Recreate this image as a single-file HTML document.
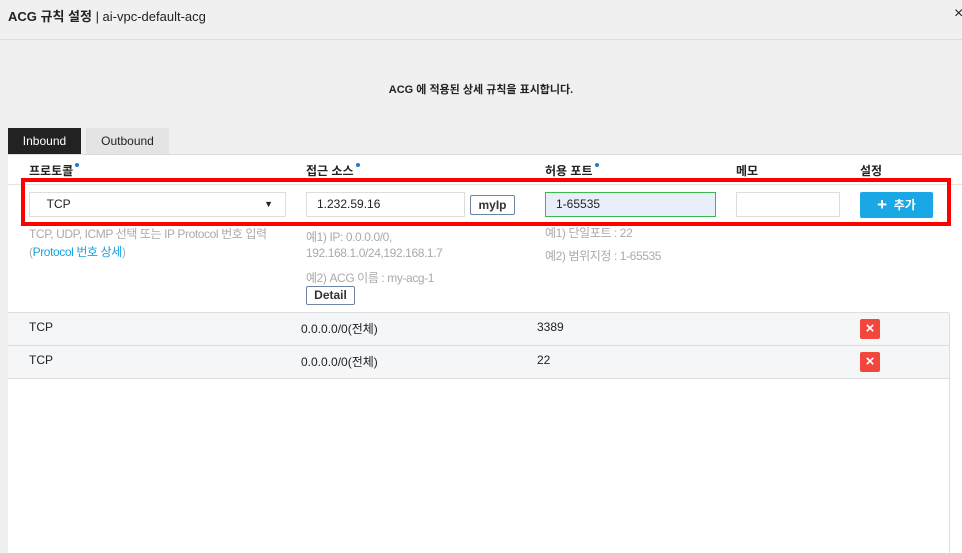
<!DOCTYPE html>
<html><head><meta charset="utf-8"><style>
*{margin:0;padding:0;box-sizing:border-box}
body{width:962px;height:553px;overflow:hidden;background:#f0f0f0;font-family:"Liberation Sans","Noto Sans CJK KR",sans-serif;position:relative;color:#222;font-size:12px}
.a{position:absolute;white-space:nowrap}
.dot{display:inline-block;width:4px;height:4px;border-radius:50%;background:#1a7fd4;vertical-align:top;margin-left:2px;margin-top:1px}
.hint{color:#aaa;font-size:12px;letter-spacing:-0.4px}
.inp{position:absolute;background:#fff;border:1px solid #ddd;height:25px;font-size:12px;padding-left:10px;line-height:23px}
.del{position:absolute;width:20px;height:20px;background:#f2473c;border-radius:2px;color:#fff;text-align:center;line-height:20px;font-size:15px;font-weight:bold}
</style></head><body>
<div class="a" style="left:8px;top:6px;font-size:13px"><b>ACG 규칙 설정</b> | ai-vpc-default-acg</div>
<div class="a" style="left:954px;top:5px;font-size:16px;color:#222">×</div>
<div class="a" style="left:0;top:39px;width:962px;height:1px;background:#ddd"></div>
<div class="a" style="left:0;top:81px;width:962px;text-align:center;font-size:11px;font-weight:bold">ACG 에 적용된 상세 규칙을 표시합니다.</div>
<div class="a" style="left:8px;top:128px;width:73px;height:26px;background:#222;color:#fff;text-align:center;line-height:26px">Inbound</div>
<div class="a" style="left:86px;top:128px;width:83px;height:26px;background:#e4e4e4;color:#222;text-align:center;line-height:26px">Outbound</div>
<div class="a" style="left:8px;top:154px;width:954px;height:399px;background:#fff;border-top:1px solid #ddd"></div>
<div class="a" style="left:29px;top:162px;font-weight:bold">프로토콜<span class="dot"></span></div>
<div class="a" style="left:306px;top:162px;font-weight:bold">접근 소스<span class="dot"></span></div>
<div class="a" style="left:545px;top:162px;font-weight:bold">허용 포트<span class="dot"></span></div>
<div class="a" style="left:736px;top:162px;font-weight:bold">메모</div>
<div class="a" style="left:860px;top:162px;font-weight:bold">설정</div>
<div class="a" style="left:8px;top:184px;width:954px;height:1px;background:#e4e4e4"></div>
<div class="inp" style="left:29px;top:192px;width:257px">&nbsp;&nbsp;TCP<span style="position:absolute;right:12px;top:0;font-size:9px">▼</span></div>
<div class="inp" style="left:306px;top:192px;width:159px">1.232.59.16</div>
<div class="a" style="left:470px;top:195px;width:45px;height:20px;border:1px solid #6e84a3;border-radius:2px;text-align:center;line-height:18px;font-weight:600;color:#333">myIp</div>
<div class="inp" style="left:545px;top:192px;width:171px;background:#e8effa;border-color:#3cba4e">1-65535</div>
<div class="inp" style="left:736px;top:192px;width:104px"></div>
<div class="a" style="left:860px;top:192px;width:73px;height:26px;background:#1aa7e6;border-radius:2px;color:#fff;text-align:center;line-height:26px;font-weight:bold"><span style="font-size:17px;vertical-align:-1px">+</span>&nbsp; 추가</div>
<div class="a" style="left:21px;top:178px;width:930px;height:48px;border:4px solid #f00"></div>
<div class="a hint" style="left:29px;top:225px">TCP, UDP, ICMP 선택 또는 IP Protocol 번호 입력</div>
<div class="a hint" style="left:29px;top:243px">(<span style="color:#1aa3e0">Protocol 번호 상세</span>)</div>
<div class="a hint" style="left:306px;top:228px">예1) IP: 0.0.0.0/0,</div>
<div class="a hint" style="left:306px;top:246px">192.168.1.0/24,192.168.1.7</div>
<div class="a hint" style="left:306px;top:269px">예2) ACG 이름 : my-acg-1</div>
<div class="a" style="left:306px;top:286px;width:49px;height:19px;border:1px solid #6e84a3;border-radius:2px;text-align:center;line-height:17px;font-weight:600;color:#333">Detail</div>
<div class="a hint" style="left:545px;top:224px">예1) 단일포트 : 22</div>
<div class="a hint" style="left:545px;top:247px">예2) 범위지정 : 1-65535</div>
<div class="a" style="left:8px;top:312px;width:941px;height:66px;background:#f5f6f8;border-top:1px solid #ddd"></div>
<div class="a" style="left:8px;top:345px;width:941px;height:1px;background:#ddd"></div>
<div class="a" style="left:8px;top:378px;width:941px;height:1px;background:#ddd"></div>
<div class="a" style="left:949px;top:313px;width:1px;height:240px;background:#ddd"></div>
<div class="a" style="left:29px;top:320px">TCP</div>
<div class="a" style="left:301px;top:320px">0.0.0.0/0(전체)</div>
<div class="a" style="left:537px;top:320px">3389</div>
<div class="del" style="left:860px;top:319px">×</div>
<div class="a" style="left:29px;top:353px">TCP</div>
<div class="a" style="left:301px;top:353px">0.0.0.0/0(전체)</div>
<div class="a" style="left:537px;top:353px">22</div>
<div class="del" style="left:860px;top:352px">×</div>
</body></html>
